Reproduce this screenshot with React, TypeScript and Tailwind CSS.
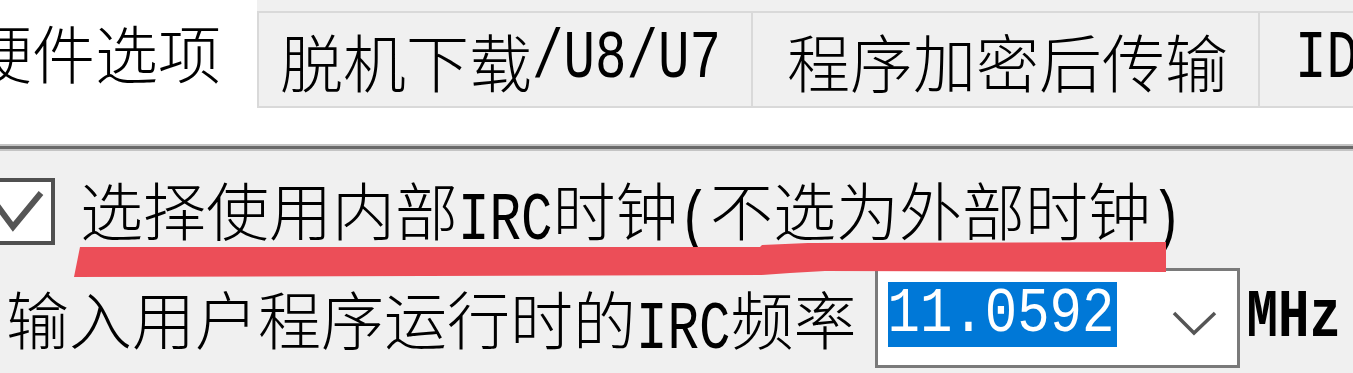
import type { ReactNode } from 'react'

function Lat({ children, bold = false, className = '' }: { children: ReactNode; bold?: boolean; className?: string }) {
  return (
    <span
      className={`inline-block scale-y-[1.3] font-['Liberation_Mono',monospace] text-[52.5px] ${bold ? 'font-bold' : 'font-normal'} ${className}`}
    >
      {children}
    </span>
  )
}

export default function App() {
  return (
    <div className="relative flex h-[373px] w-[1353px] flex-col overflow-hidden bg-white font-['Noto_Sans_CJK_SC','Noto_Sans_CJK_JP',sans-serif] text-[63px] font-light leading-none text-black">
      {/* tab strip */}
      <div className="flex h-[108px] shrink-0 bg-[#f0f0f0]">
        <div className="-ml-[62px] flex h-[108px] shrink-0 items-center bg-white pb-[8px] pl-[31px] pr-[36px]">
          硬件选项
        </div>
        <div className="mt-[11px] flex h-[97px] shrink-0 items-center whitespace-nowrap border-2 border-[#d9d9d9] pl-[21px] pr-[30px]">
          脱机下载<Lat>/U8/U7</Lat>
        </div>
        <div className="mt-[11px] flex h-[97px] shrink-0 items-center whitespace-nowrap border-y-2 border-r-2 border-[#d9d9d9] pl-[34px] pr-[30px]">
          程序加密后传输
        </div>
        <div className="mt-[11px] flex h-[97px] shrink-0 items-center whitespace-nowrap border-y-2 border-[#d9d9d9] pl-[35px] pr-[30px]">
          <Lat>ID</Lat>号
        </div>
      </div>

      <div className="h-[36px] shrink-0" />

      {/* group box edge */}
      <div className="h-[2px] shrink-0 bg-[#c4c4c4]" />
      <div className="h-[3px] shrink-0 bg-[#6a6a6a]" />
      <div className="h-[2px] shrink-0 bg-[#c4c4c4]" />

      <div className="flex flex-1 flex-col bg-[#f0f0f0]">
        {/* checkbox row */}
        <div className="mt-[27px] flex h-[67px] items-center whitespace-nowrap">
          <div className="-ml-[12px] size-[67px] shrink-0 border-[4px] border-[#505050] bg-white">
            <svg width="59" height="59" viewBox="0 0 59 59">
              <polyline points="4,22 21,45 49,11" fill="none" stroke="#555" strokeWidth="6" />
            </svg>
          </div>
          <span className="ml-[25px]">
            选择使用内部<Lat>IRC</Lat>时钟<Lat>(</Lat>不选为外部时钟<Lat>)</Lat>
          </span>
        </div>

        {/* frequency row */}
        <div className="mt-[23px] flex h-[100px] items-center whitespace-nowrap pl-[6px]">
          <span className="pt-[6px]">
            输入用户程序运行时的<Lat>IRC</Lat>频率
          </span>
          <div className="ml-[18px] flex h-[100px] w-[365px] shrink-0 items-center border-[3px] border-[#7a7a7a] bg-white">
            <div className="mb-[7px] ml-[10px] flex h-[65px] w-[229px] items-center bg-[#0078d7] text-white">
              <span className="inline-block scale-y-[1.15] font-['Liberation_Mono',monospace] text-[54px] font-normal">11.0592</span>
            </div>
            <svg className="ml-[55px] mt-[11px]" width="45" height="27" viewBox="0 0 45 27">
              <polyline points="2,3 22,23 43,3" fill="none" stroke="#555" strokeWidth="3.5" />
            </svg>
          </div>
          <Lat bold className="ml-[7px]">MHz</Lat>
        </div>
      </div>

      {/* red annotation stroke */}
      <svg className="pointer-events-none absolute left-0 top-0" width="1353" height="373" viewBox="0 0 1353 373">
        <polygon
          points="80,247 760,247 762,245 808,243 1166,242 1166,272 825,271 790,273 762,275 74,277"
          fill="#ec4e58"
        />
      </svg>
    </div>
  )
}
